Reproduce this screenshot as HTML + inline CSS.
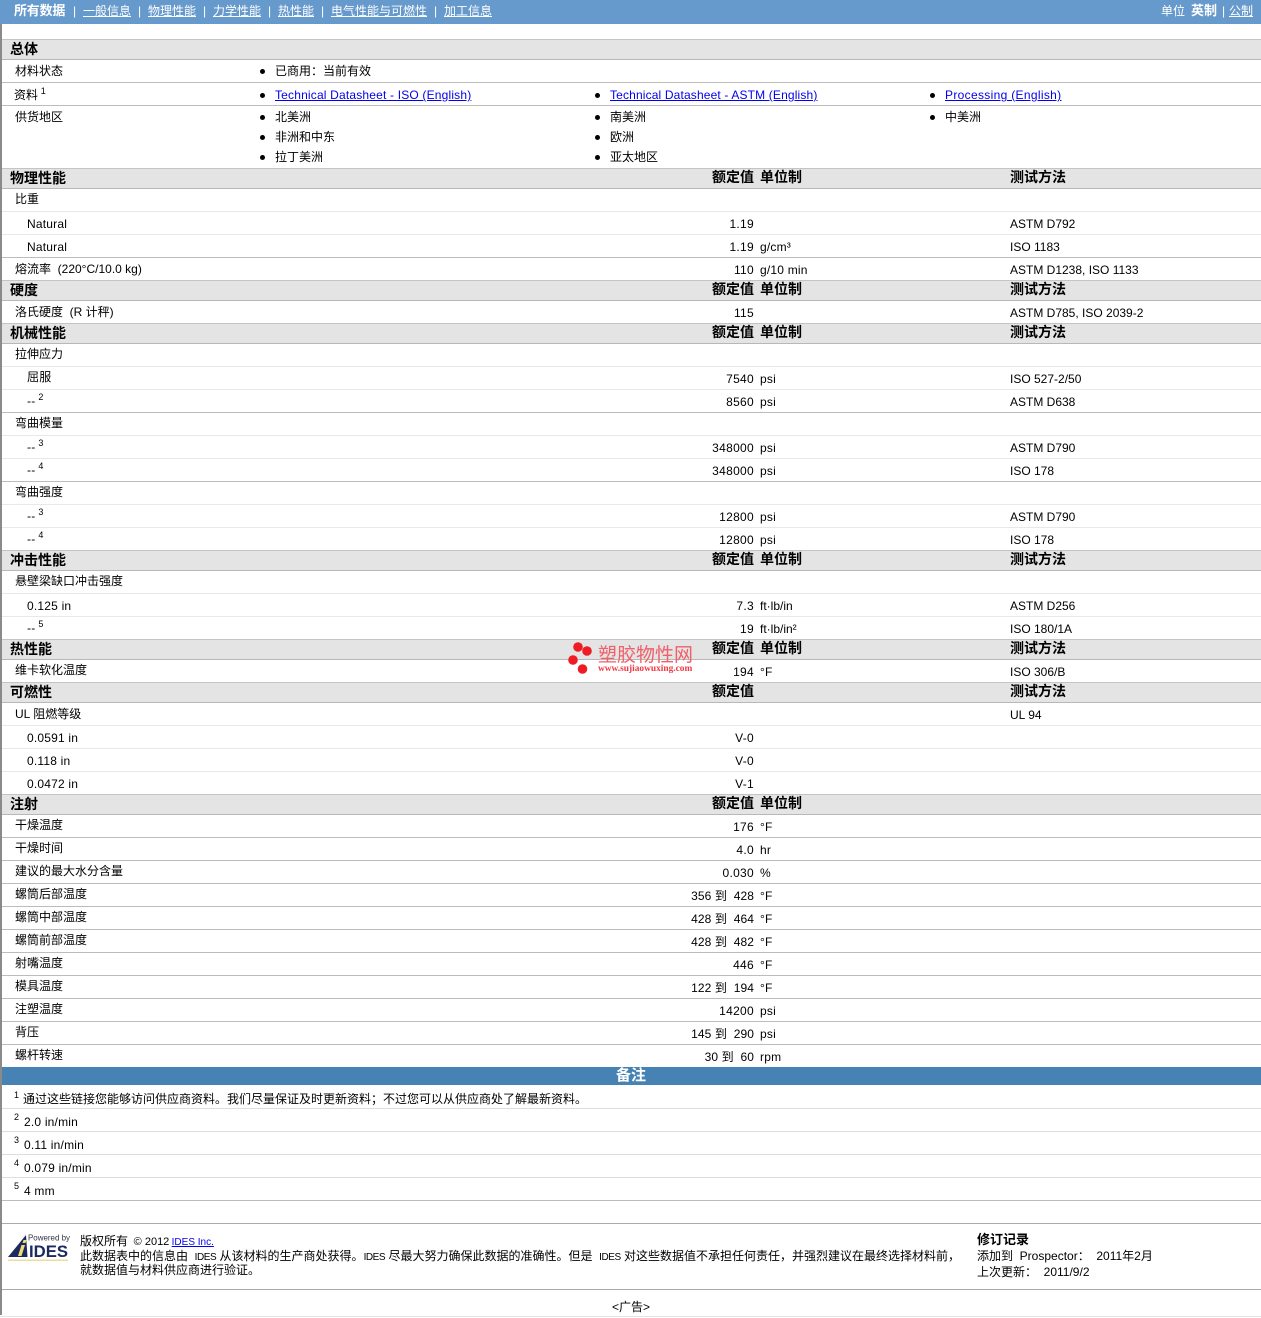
<!DOCTYPE html>
<html lang="zh"><head><meta charset="utf-8"><title>所有数据</title>
<style>
html,body{margin:0;padding:0;background:#fff}
body{width:1261px;height:1318px;position:relative;overflow:hidden;font:12px/14px "Liberation Sans","WenQuanYi Zen Hei","Noto Sans CJK SC",sans-serif;color:#000}
div{position:absolute;white-space:nowrap}
a{color:#00e;text-decoration:underline}
sup{font-size:9px;line-height:0;vertical-align:5px;letter-spacing:0;margin-left:-.6px}
.b{left:2px;right:0;height:19px;background:#e4e4e4;border-top:1px solid #c4c4c4;border-bottom:1px solid #b8b8b8}
.d,.g{left:2px;right:0;height:1px;background:#bcbcbc}
.g{background:#e8e8e8}
.l{left:15px}.n{left:27px;letter-spacing:.2px}.h{left:10px;font-weight:bold;font-size:14px}
.r{right:507px;text-align:right;letter-spacing:.3px}.r.t{letter-spacing:.08px}.u{left:760px;letter-spacing:.2px}.m{left:1010px}
.hv{right:507px;font-weight:bold;font-size:14px;margin-top:-1px}.hu{left:760px;font-weight:bold;font-size:14px;margin-top:-1px}.hm{left:1010px;font-weight:bold;font-size:14px;margin-top:-1px}
.p1{left:275px}.p2{left:610px}.p3{left:945px}
.p1 a{letter-spacing:.18px}.p2 a{letter-spacing:.15px}.p3 a{letter-spacing:.32px}
.o{width:5px;height:5px;border-radius:50%;background:#000}
.nav{color:#fff}.nav a{color:#fff}
.f{left:24px;letter-spacing:.2px}.s{left:14px;font-size:9px}
.i{font-size:10px;letter-spacing:-.45px}
</style></head><body>
<div style="left:0;top:0;width:2px;height:1315px;background:#8a8a8a"></div>
<div style="left:0;top:0;width:1261px;height:24px;background:#6699cc"></div>
<div class="nav" style="left:14px;top:4px;font-weight:bold;font-size:13px;letter-spacing:-.2px">所有数据</div>
<div class="nav" style="left:73px;top:4px">|</div><div class="nav" style="left:83px;top:4px"><a href="#">一般信息</a></div>
<div class="nav" style="left:138px;top:4px">|</div><div class="nav" style="left:148px;top:4px"><a href="#">物理性能</a></div>
<div class="nav" style="left:203px;top:4px">|</div><div class="nav" style="left:213px;top:4px"><a href="#">力学性能</a></div>
<div class="nav" style="left:268px;top:4px">|</div><div class="nav" style="left:278px;top:4px"><a href="#">热性能</a></div>
<div class="nav" style="left:321px;top:4px">|</div><div class="nav" style="left:331px;top:4px"><a href="#">电气性能与可燃性</a></div>
<div class="nav" style="left:434px;top:4px">|</div><div class="nav" style="left:444px;top:4px"><a href="#">加工信息</a></div>
<div class="nav" style="left:1161px;top:4px">单位</div><div class="nav" style="left:1191px;top:4px;font-weight:bold;font-size:13px">英制</div>
<div class="nav" style="left:1222px;top:4px">|</div><div class="nav" style="left:1229px;top:4px"><a href="#">公制</a></div>

<div class="b" style="top:39px"></div><div class="h" style="top:42px">总体</div>
<div class="l" style="top:64px">材料状态</div><div class="o" style="left:260px;top:69px"></div><div class="p1" style="top:64px">已商用：当前有效</div>
<div class="d" style="top:82px"></div>
<div class="l" style="top:88px;left:14px">资料 <sup>1</sup></div>
<div class="o" style="left:260px;top:93px"></div><div class="p1" style="top:88px"><a href="#">Technical Datasheet - ISO (English)</a></div>
<div class="o" style="left:595px;top:93px"></div><div class="p2" style="top:88px"><a href="#">Technical Datasheet - ASTM (English)</a></div>
<div class="o" style="left:930px;top:93px"></div><div class="p3" style="top:88px"><a href="#">Processing (English)</a></div>
<div class="d" style="top:105px"></div>
<div class="l" style="top:110px">供货地区</div>
<div class="o" style="left:260px;top:115px"></div><div class="p1" style="top:110px">北美洲</div>
<div class="o" style="left:595px;top:115px"></div><div class="p2" style="top:110px">南美洲</div>
<div class="o" style="left:930px;top:115px"></div><div class="p3" style="top:110px">中美洲</div>
<div class="o" style="left:260px;top:135px"></div><div class="p1" style="top:130px">非洲和中东</div>
<div class="o" style="left:595px;top:135px"></div><div class="p2" style="top:130px">欧洲</div>
<div class="o" style="left:260px;top:155px"></div><div class="p1" style="top:150px">拉丁美洲</div>
<div class="o" style="left:595px;top:155px"></div><div class="p2" style="top:150px">亚太地区</div>

<div class="b" style="top:168px"></div><div class="h" style="top:171px">物理性能</div><div class="hv" style="top:171px">额定值</div><div class="hu" style="top:171px">单位制</div><div class="hm" style="top:171px">测试方法</div>
<div class="l" style="top:192px">比重</div>
<div class="g" style="top:211px"></div>
<div class="n" style="top:217px">Natural</div><div class="r" style="top:217px">1.19</div><div class="m" style="top:217px">ASTM D792</div>
<div class="g" style="top:234px"></div>
<div class="n" style="top:240px">Natural</div><div class="r" style="top:240px">1.19</div><div class="u" style="top:240px">g/cm³</div><div class="m" style="top:240px">ISO 1183</div>
<div class="d" style="top:257px"></div>
<div class="l" style="top:262px">熔流率&nbsp; (220°C/10.0 kg)</div><div class="r" style="top:263px">110</div><div class="u" style="top:263px">g/10 min</div><div class="m" style="top:263px">ASTM D1238, ISO 1133</div>

<div class="b" style="top:280px"></div><div class="h" style="top:283px">硬度</div><div class="hv" style="top:283px">额定值</div><div class="hu" style="top:283px">单位制</div><div class="hm" style="top:283px">测试方法</div>
<div class="l" style="top:305px">洛氏硬度&nbsp; (R 计秤)</div><div class="r" style="top:306px">115</div><div class="m" style="top:306px">ASTM D785, ISO 2039-2</div>

<div class="b" style="top:323px"></div><div class="h" style="top:326px">机械性能</div><div class="hv" style="top:326px">额定值</div><div class="hu" style="top:326px">单位制</div><div class="hm" style="top:326px">测试方法</div>
<div class="l" style="top:347px">拉伸应力</div>
<div class="g" style="top:366px"></div>
<div class="n" style="top:370px">屈服</div><div class="r" style="top:372px">7540</div><div class="u" style="top:372px">psi</div><div class="m" style="top:372px">ISO 527-2/50</div>
<div class="g" style="top:389px"></div>
<div class="n" style="top:394px">-- <sup>2</sup></div><div class="r" style="top:395px">8560</div><div class="u" style="top:395px">psi</div><div class="m" style="top:395px">ASTM D638</div>
<div class="d" style="top:412px"></div>
<div class="l" style="top:416px">弯曲模量</div>
<div class="g" style="top:435px"></div>
<div class="n" style="top:440px">-- <sup>3</sup></div><div class="r" style="top:441px">348000</div><div class="u" style="top:441px">psi</div><div class="m" style="top:441px">ASTM D790</div>
<div class="g" style="top:458px"></div>
<div class="n" style="top:463px">-- <sup>4</sup></div><div class="r" style="top:464px">348000</div><div class="u" style="top:464px">psi</div><div class="m" style="top:464px">ISO 178</div>
<div class="d" style="top:481px"></div>
<div class="l" style="top:485px">弯曲强度</div>
<div class="g" style="top:504px"></div>
<div class="n" style="top:509px">-- <sup>3</sup></div><div class="r" style="top:510px">12800</div><div class="u" style="top:510px">psi</div><div class="m" style="top:510px">ASTM D790</div>
<div class="g" style="top:527px"></div>
<div class="n" style="top:532px">-- <sup>4</sup></div><div class="r" style="top:533px">12800</div><div class="u" style="top:533px">psi</div><div class="m" style="top:533px">ISO 178</div>

<div class="b" style="top:550px"></div><div class="h" style="top:553px">冲击性能</div><div class="hv" style="top:553px">额定值</div><div class="hu" style="top:553px">单位制</div><div class="hm" style="top:553px">测试方法</div>
<div class="l" style="top:574px">悬壁梁缺口冲击强度</div>
<div class="g" style="top:593px"></div>
<div class="n" style="top:599px">0.125 in</div><div class="r" style="top:599px">7.3</div><div class="u" style="top:599px;letter-spacing:0">ft·lb/in</div><div class="m" style="top:599px">ASTM D256</div>
<div class="g" style="top:616px"></div>
<div class="n" style="top:621px">-- <sup>5</sup></div><div class="r" style="top:622px">19</div><div class="u" style="top:622px;letter-spacing:0">ft·lb/in²</div><div class="m" style="top:622px">ISO 180/1A</div>

<div class="b" style="top:639px"></div><div class="h" style="top:642px">热性能</div><div class="hv" style="top:642px">额定值</div><div class="hu" style="top:642px">单位制</div><div class="hm" style="top:642px">测试方法</div>
<div class="l" style="top:663px">维卡软化温度</div><div class="r" style="top:665px">194</div><div class="u" style="top:665px">°F</div><div class="m" style="top:665px">ISO 306/B</div>

<div class="b" style="top:682px"></div><div class="h" style="top:685px">可燃性</div><div class="hv" style="top:685px">额定值</div><div class="hm" style="top:685px">测试方法</div>
<div class="l" style="top:707px">UL 阻燃等级</div><div class="m" style="top:708px">UL 94</div>
<div class="g" style="top:725px"></div>
<div class="n" style="top:731px">0.0591 in</div><div class="r" style="top:731px">V-0</div>
<div class="g" style="top:748px"></div>
<div class="n" style="top:754px">0.118 in</div><div class="r" style="top:754px">V-0</div>
<div class="g" style="top:771px"></div>
<div class="n" style="top:777px">0.0472 in</div><div class="r" style="top:777px">V-1</div>

<div class="b" style="top:794px"></div><div class="h" style="top:797px">注射</div><div class="hv" style="top:797px">额定值</div><div class="hu" style="top:797px">单位制</div>
<div class="l" style="top:818px">干燥温度</div><div class="r" style="top:820px">176</div><div class="u" style="top:820px">°F</div>
<div class="d" style="top:837px"></div>
<div class="l" style="top:841px">干燥时间</div><div class="r" style="top:843px">4.0</div><div class="u" style="top:843px">hr</div>
<div class="d" style="top:860px"></div>
<div class="l" style="top:864px">建议的最大水分含量</div><div class="r" style="top:866px">0.030</div><div class="u" style="top:866px">%</div>
<div class="d" style="top:883px"></div>
<div class="l" style="top:887px">螺筒后部温度</div><div class="r t" style="top:889px">356 到&nbsp; 428</div><div class="u" style="top:889px">°F</div>
<div class="d" style="top:906px"></div>
<div class="l" style="top:910px">螺筒中部温度</div><div class="r t" style="top:912px">428 到&nbsp; 464</div><div class="u" style="top:912px">°F</div>
<div class="d" style="top:929px"></div>
<div class="l" style="top:933px">螺筒前部温度</div><div class="r t" style="top:935px">428 到&nbsp; 482</div><div class="u" style="top:935px">°F</div>
<div class="d" style="top:952px"></div>
<div class="l" style="top:956px">射嘴温度</div><div class="r" style="top:958px">446</div><div class="u" style="top:958px">°F</div>
<div class="d" style="top:975px"></div>
<div class="l" style="top:979px">模具温度</div><div class="r t" style="top:981px">122 到&nbsp; 194</div><div class="u" style="top:981px">°F</div>
<div class="d" style="top:998px"></div>
<div class="l" style="top:1002px">注塑温度</div><div class="r" style="top:1004px">14200</div><div class="u" style="top:1004px">psi</div>
<div class="d" style="top:1021px"></div>
<div class="l" style="top:1025px">背压</div><div class="r t" style="top:1027px">145 到&nbsp; 290</div><div class="u" style="top:1027px">psi</div>
<div class="d" style="top:1044px"></div>
<div class="l" style="top:1048px">螺杆转速</div><div class="r t" style="top:1050px">30 到&nbsp; 60</div><div class="u" style="top:1050px">rpm</div>

<div style="left:2px;right:0;top:1067px;height:18px;background:#4682b4"></div>
<div style="left:616px;top:1069px;color:#fff;font-weight:bold;font-size:15px">备注</div>
<div class="s" style="top:1088px">1</div><div style="left:23px;top:1092px">通过这些链接您能够访问供应商资料。我们尽量保证及时更新资料；不过您可以从供应商处了解最新资料。</div>
<div class="g" style="top:1108px;background:#ddd"></div>
<div class="s" style="top:1110px">2</div><div class="f" style="top:1115px">2.0 in/min</div>
<div class="g" style="top:1131px;background:#ddd"></div>
<div class="s" style="top:1133px">3</div><div class="f" style="top:1138px">0.11 in/min</div>
<div class="g" style="top:1154px;background:#ddd"></div>
<div class="s" style="top:1156px">4</div><div class="f" style="top:1161px">0.079 in/min</div>
<div class="g" style="top:1177px;background:#ddd"></div>
<div class="s" style="top:1179px">5</div><div class="f" style="top:1184px">4 mm</div>
<div class="d" style="top:1200px"></div>
<div class="d" style="top:1223px;background:#aaa"></div>

<svg style="position:absolute;left:6px;top:1233px" width="66" height="30" viewBox="0 0 66 30">
<path d="M2 24 L20 2 L21.5 24 Z" fill="#1c2a60"/>
<path d="M12 23 L15.5 12 L19 12 L15.5 23 Z M16.5 10 L17.5 7 L20.5 7 L19.5 10 Z" fill="#f0dc70"/>
<rect x="2" y="26.5" width="60" height="1.5" fill="#eedc9a"/>
<text x="22" y="7.5" font-family="Liberation Sans,sans-serif" font-size="8" fill="#334" textLength="42" lengthAdjust="spacingAndGlyphs">Powered by</text>
<text x="23" y="24" font-family="Liberation Sans,sans-serif" font-size="17" font-weight="bold" fill="#1c2a60" textLength="39" lengthAdjust="spacingAndGlyphs">IDES</text>
</svg>
<div style="left:80px;top:1234px">版权所有&nbsp; <span style="font-size:11px;margin-left:-1px">© 2012</span> <a href="#" style="font-size:10px;margin-left:-1px">IDES Inc.</a></div>
<div style="left:80px;top:1249px">此数据表中的信息由&nbsp; <span class="i">IDES</span> 从该材料的生产商处获得。<span class="i">IDES</span> 尽最大努力确保此数据的准确性。但是&nbsp; <span class="i">IDES</span> 对这些数据值不承担任何责任，并强烈建议在最终选择材料前，</div>
<div style="left:80px;top:1263px">就数据值与材料供应商进行验证。</div>
<div style="left:977px;top:1233px;font-weight:bold;font-size:13px">修订记录</div>
<div style="left:977px;top:1249px">添加到&nbsp; Prospector：&nbsp; 2011年2月</div>
<div style="left:977px;top:1265px">上次更新：&nbsp; 2011/9/2</div>
<div class="d" style="top:1289px;background:#aaa"></div>
<div style="left:612px;top:1300px;font-size:12px">&lt;广告&gt;</div>
<div style="left:0;right:0;top:1316px;height:1px;background:#e4e4e4"></div>

<svg style="position:absolute;left:565px;top:640px" width="35" height="36" viewBox="0 0 35 36">
<circle cx="13" cy="7" r="4.8" fill="#ee1c25"/><circle cx="22" cy="11" r="4.8" fill="#ee1c25"/><circle cx="8" cy="20" r="4.8" fill="#ee1c25"/><circle cx="17.5" cy="29" r="4.8" fill="#ee1c25"/>
</svg>
<div style="left:598px;top:646px;font-size:19px;line-height:20px;color:#f0606a">塑胶物性网</div>
<div style="left:598px;top:663px;font:bold 9.4px/12px 'Liberation Serif',serif;color:#ee3a44">www.sujiaowuxing.com</div>
</body></html>
